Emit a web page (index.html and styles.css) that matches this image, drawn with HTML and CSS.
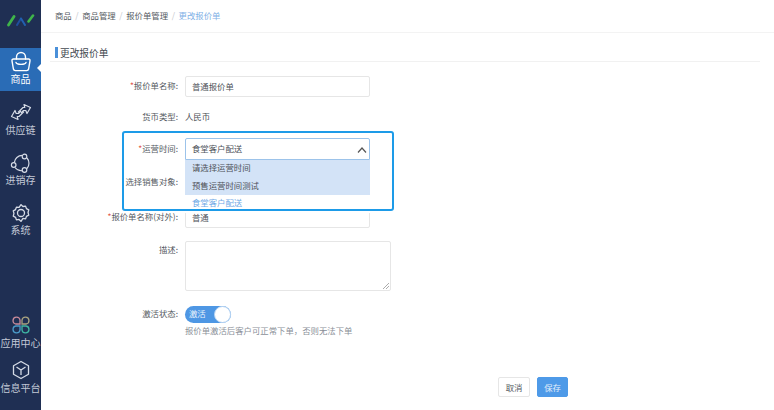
FILE: index.html
```html
<!DOCTYPE html>
<html lang="zh-CN">
<head>
<meta charset="utf-8">
<title>更改报价单</title>
<link rel="stylesheet" href="styles.css">
</head>
<body>
<div class="app">
  <aside class="side">
    <div class="logo">
      <svg width="28" height="13" viewBox="0 0 28 13" fill="none" stroke-linecap="round"><path d="M1.500 11 7 2.500" stroke="#3fb54a" stroke-width="2.800"/><path d="M10 11 14 4.500" stroke="#1f4f9c" stroke-width="2"/><path d="M14 4.500 18 11" stroke="#2260b0" stroke-width="2"/><path d="M21.500 7.500 26 1.500" stroke="#3fb54a" stroke-width="2.600"/></svg>
    </div>
    <nav class="nav">
      <a class="item active">
        <svg class="ico" width="22" height="22" viewBox="0 0 22 22" fill="none" stroke="#fff" stroke-width="1.400" stroke-linecap="round" stroke-linejoin="round"><path d="M3.500 8h15a1.500 1.500 0 0 1 1.500 1.800l-1.400 8.200a2 2 0 0 1-2 1.600H5.400a2 2 0 0 1-2-1.600L2 9.800A1.500 1.500 0 0 1 3.500 8z"/><path d="M6.500 8V6a4.500 4.500 0 0 1 9 0v2"/><path d="M6 11.500c1 2.500 9 2.500 10 0"/></svg>
        <span>商品</span>
      </a>
      <a class="item">
        <svg class="ico" width="22" height="22" viewBox="0 0 22 22" fill="none" stroke="#d5dbe6" stroke-width="1.200" stroke-linejoin="round"><path d="M8 10.500 13 5.500H14.800L14 2.500 20.500 5.500 17 11.500 15.800 8.500H13.500L11 11"/><path d="M8 10.500 13 5.500H14.800L14 2.500 20.500 5.500 17 11.500 15.800 8.500H13.500L11 11" transform="rotate(180 11 10)"/></svg>
        <span>供应链</span>
      </a>
      <a class="item">
        <svg class="ico" width="22" height="22" viewBox="0 0 22 22" fill="none" stroke="#d5dbe6" stroke-width="1.200"><path d="M4.300 10.600A8 8 0 0 1 12.200 3.400M17 6A8 8 0 0 1 17 16.500M12 18.700A8 8 0 0 1 5 15.500"/><circle cx="14.500" cy="4.500" r="2.300"/><circle cx="3.700" cy="13" r="2.300"/><circle cx="14.500" cy="18" r="2.300"/></svg>
        <span>进销存</span>
      </a>
      <a class="item">
        <svg class="ico" width="22" height="22" viewBox="-1.500 -1.500 25 25" fill="none" stroke="#d5dbe6" stroke-width="1.500"><path d="M11 1.500l2.200 2.100 3-.4 1 2.800 2.600 1.500-.8 2.900.8 3-2.600 1.400-1 2.900-3-.5L11 20.500l-2.200-2.200-3 .5-1-2.900-2.600-1.400.8-3-.8-2.900 2.600-1.500 1-2.800 3 .4z" stroke-linejoin="round"/><circle cx="11" cy="11" r="4"/></svg>
        <span>系统</span>
      </a>
    </nav>
    <div class="nav-bottom">
      <a class="item">
        <svg class="ico" width="20" height="20" viewBox="0 0 20 20" fill="none" stroke-width="1.300"><path d="M9 9H5a3.500 3.500 0 1 1 4-4z" stroke="#c98b9b"/><path d="M11 9h4a3.500 3.500 0 1 0-4-4z" stroke="#a9a37f"/><path d="M9 11H5a3.500 3.500 0 1 0 4 4z" stroke="#4c9bc9"/><path d="M11 11h4a3.500 3.500 0 1 1-4 4z" stroke="#3fb5a3"/></svg>
        <span>应用中心</span>
      </a>
      <a class="item">
        <svg class="ico" width="20" height="20" viewBox="0 0 20 20" fill="none" stroke="#d5dbe6" stroke-width="1.300" stroke-linejoin="round"><path d="M10 1.500l7.500 4.200v8.600L10 18.500l-7.500-4.200V5.700z"/><path d="M5.500 7 10 10l4.500-3M10 10v5"/></svg>
        <span>信息平台</span>
      </a>
    </div>
  </aside>
  <main class="main">
    <div class="crumbs">
      <span>商品</span><i>/</i><span>商品管理</span><i>/</i><span>报价单管理</span><i>/</i><span class="current">更改报价单</span>
    </div>
    <div class="title-wrap"><h1 class="title">更改报价单</h1></div>
    <form class="form">
      <div class="row r1"><label class="lab"><b>*</b>报价单名称:</label><div class="input">普通报价单</div></div>
      <div class="row r2"><label class="lab">货币类型:</label><div class="plain">人民币</div></div>
      <div class="row r3"><label class="lab"><b>*</b>运营时间:</label>
        <div class="select">食堂客户配送
          <svg class="chev" width="10" height="6" viewBox="0 0 10 6" fill="none" stroke="#555" stroke-width="1.200"><path d="M1 5.500 5 1l4 4.500"/></svg>
          <ul class="menu">
            <li class="hl">请选择运营时间</li>
            <li class="hl">预售运营时间测试</li>
            <li class="sel">食堂客户配送</li>
          </ul>
        </div>
      </div>
      <div class="row r4"><label class="lab">选择销售对象:</label></div>
      <div class="row r5"><label class="lab"><b>*</b>报价单名称(对外):</label><div class="input">普通</div></div>
      <div class="row r6"><label class="lab">描述:</label><div class="area"><svg class="grip" width="6" height="6" viewBox="0 0 6 6" stroke="#888" stroke-width=".7"><path d="M0 6 6 0M3 6l3-3"/></svg></div></div>
      <div class="row r7"><label class="lab">激活状态:</label><div class="switch"><span>激活</span><em class="knob"></em></div></div>
      <div class="hint">报价单激活后客户可正常下单，否则无法下单</div>
    </form>
    <div class="actions">
      <button class="btn" type="button">取消</button>
      <button class="btn primary" type="button">保存</button>
    </div>
    <div class="callout"></div>
  </main>
</div>
</body>
</html>
```
FILE: styles.css
```css
* { box-sizing: border-box; }
html, body { margin: 0; height: 100%; }
body {
  font-family: "Noto Sans CJK SC", "Noto Sans", sans-serif;
  font-size: 8.400px;
  color: #555a62;
  background: #fff;
  overflow: hidden;
}
.app { display: flex; width: 774px; height: 410px; }
.side {
  width: 41px;
  flex: none;
  background: #1f2f53;
  display: flex;
  flex-direction: column;
  color: #c3cad7;
}
.logo { height: 48px; display: flex; align-items: center; justify-content: center; padding: 0 0 8px 1px; }
.logo svg { display: block; }
.item {
  display: flex;
  flex-direction: column;
  align-items: center;
  font-size: 10px;
  line-height: 14px;
  position: relative;
  white-space: nowrap;
}
.nav { display: flex; flex-direction: column; }
.nav .item { height: 50px; }
.nav .ico { margin-bottom: -1px; }
.nav .item.active { height: 43px; margin-bottom: 11px; background: #2a6cb6; color: #fff; padding-top: 3px; }
.item.active::after {
  content: "";
  position: absolute;
  right: 0;
  top: 16px;
  border: 4px solid transparent;
  border-right-color: #fff;
}
.ico { display: block; }
.nav-bottom { margin-top: auto; padding-bottom: 15px; display: flex; flex-direction: column; gap: 10px; }
.nav-bottom .ico { margin-bottom: 1px; }
.main { flex: 1; position: relative; min-width: 0; }
.crumbs {
  height: 33px;
  padding: 0 0 2px 14px;
  display: flex;
  align-items: center;
  border-bottom: 1px solid #f3f3f3;
  color: #555a62;
}
.crumbs i { font-style: normal; color: #c5c8cc; margin: 0 3.600px; }
.crumbs .current { color: #7fb0e6; }
.title-wrap { padding: 13px 14px 0 9px; }
.title {
  margin: 0;
  font-size: 9.700px;
  font-weight: 400;
  line-height: 15px;
  height: 16px;
  color: #444a52;
  padding-left: 10px;
  position: relative;
  border-bottom: 1px solid #f1f1f1;
}
.title::before {
  content: "";
  position: absolute;
  left: 5px;
  top: 1px;
  width: 2.500px;
  height: 11px;
  background: #4a90d9;
}
.form { padding-top: 14px; }
.row { display: flex; align-items: center; }
.lab { width: 137px; flex: none; text-align: right; padding-bottom: 3px; white-space: nowrap; line-height: 14px; }
.lab b { color: #e2574c; font-weight: 400; }
.input, .select, .plain { margin-left: 7px; }
.input {
  width: 185px;
  height: 100%;
  border: 1px solid #e6e6e6;
  border-radius: 2px;
  padding: 0 0 2px 6px;
  display: flex;
  align-items: center;
  color: #4d5158;
}
.plain { color: #4d5158; padding-bottom: 2px; }
.r1 { height: 21px; }
.r2 { height: 20px; margin-top: 10px; }
.r3 { height: 22px; margin-top: 11px; position: relative; }
.r4 { height: 20px; margin-top: 12px; }
.r5 { height: 21px; margin-top: 15px; }
.r6 { height: 50px; margin-top: 13px; align-items: flex-start; }
.r7 { height: 17px; margin-top: 15px; }
.select {
  width: 185px;
  height: 22px;
  border: 1px solid #9cc3ea;
  border-radius: 2px 2px 0 0;
  padding: 0 0 3px 6px;
  display: flex;
  align-items: center;
  position: relative;
  color: #4d5158;
  background: #fff;
}
.chev { position: absolute; right: 2.500px; top: 7.500px; }
.menu {
  position: absolute;
  left: -1px;
  top: 21px;
  width: 185px;
  margin: 0;
  padding: 0;
  list-style: none;
  background: #fff;
  z-index: 2;
}
.menu li { height: 17.500px; line-height: 15px; padding-left: 7px; }
.menu .hl { background: #d3e3f7; color: #4d5158; }
.menu .sel { color: #6fa9e6; }
.r6 .lab { padding-top: 1px; padding-bottom: 0; }
.area {
  margin-left: 7px;
  width: 206px;
  height: 50px;
  border: 1px solid #e6e6e6;
  border-radius: 2px;
  position: relative;
}
.grip { position: absolute; right: 1px; bottom: 1px; }
.switch {
  margin-left: 7px;
  width: 46px;
  height: 17px;
  border-radius: 9px;
  background: #4e97e4;
  color: #eaf3fc;
  position: relative;
  padding-left: 4px;
  line-height: 15px;
}
.knob {
  position: absolute;
  right: 0;
  top: 0;
  width: 17px;
  height: 17px;
  border-radius: 50%;
  background: #fff;
  border: 1px solid #b9d5f2;
}
.hint { margin: 1px 0 0 144px; line-height: 12px; color: #8a8f98; }
.actions {
  display: flex;
  gap: 7px;
  justify-content: flex-end;
  padding-right: 206px;
  margin-top: 41px;
}
.btn {
  font: inherit;
  width: 32px;
  height: 20px;
  padding: 0 0 1px;
  border: 1px solid #e6e6e6;
  border-radius: 2px;
  background: #fff;
  color: #555a62;
}
.btn.primary { width: 31px; background: #4e9ae8; border-color: #4e9ae8; color: #e3effb; }
.callout {
  position: absolute;
  left: 81px;
  top: 131px;
  width: 272px;
  height: 80px;
  border: 2.500px solid #1d9be8;
  border-radius: 3px;
  z-index: 3;
  pointer-events: none;
}
```
